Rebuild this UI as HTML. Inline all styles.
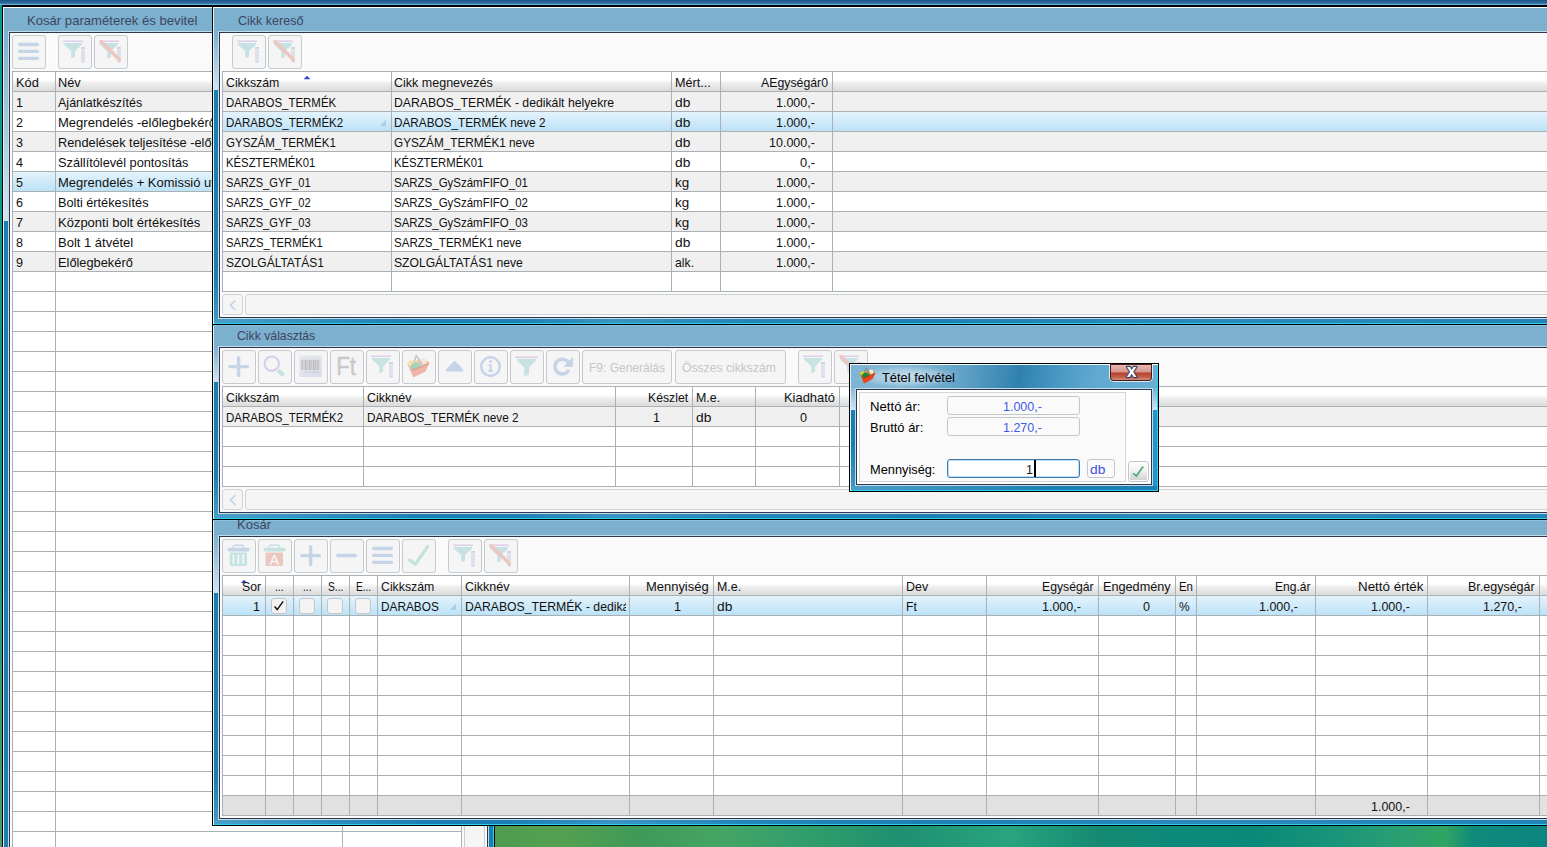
<!DOCTYPE html>
<html lang="hu"><head><meta charset="utf-8"><title>Kosár</title><style>
html,body{margin:0;padding:0;background:#fff}
#r{position:relative;width:1547px;height:847px;overflow:hidden;font-family:"Liberation Sans",sans-serif;font-size:13px;color:#111}
#r div,#r .t,#r svg.a{position:absolute}
.t{display:block;white-space:pre;transform-origin:0 50%}
.cap{letter-spacing:0}
.b{box-sizing:border-box;border:1px solid #c4cacf;border-radius:3px;background:#f5f5f5}
.i{position:absolute;left:-1px;top:-1px}
.i0{position:absolute;left:0;top:0}
.sb{box-sizing:border-box;border:1px solid #ced3d7;border-radius:3px;background:#f5f5f5}
.cb{box-sizing:border-box;width:16px;height:16px;border:1px solid #c4c6c8;border-radius:3px;background:#f3f3f3}
.f{box-sizing:border-box;border:1px solid #c4c6c8;border-radius:3px;background:#fafafa}
</style></head><body><div id="r">
<div style="left:0px;top:0px;width:1547px;height:847px;background:#fff;"></div>
<div style="left:0px;top:0px;width:1547px;height:5px;background:linear-gradient(#1d5486 0,#2a6498 45%,#3f7bb0 78%,#5fb4de 80%,#5fb4de 100%);"></div>
<div style="left:0px;top:5px;width:2px;height:842px;background:linear-gradient(#0d9a8c 0,#0a9a8a 55%,#3a9b74 80%,#4a9c6a 100%);"></div>
<div style="left:495px;top:820px;width:1060px;height:30px;background:linear-gradient(90deg,#4f9b4f 0,#55a050 65px,#3e9a58 145px,#45a565 225px,#2e9c6c 325px,#1f9070 405px,#28a47e 515px,#158a72 605px,#0e8a7a 675px,#0a8878 755px,#18947a 835px,#2a9f72 905px,#30a562 950px,#108a7a 978px,#0c8580 1052px);"></div>
<div style="left:2px;top:5px;width:493px;height:896px;background:#000;"></div>
<div style="left:3px;top:7px;width:491px;height:893px;background:#e3eff7;"></div>
<div style="left:3px;top:7px;width:491px;height:1px;background:#ffffff;"></div>
<div style="left:4px;top:8px;width:489px;height:891px;background:linear-gradient(180deg,#7bb0cf 0,#7bb0cf 24px,#d2e5f1 213px,#1a7eb0 213px,#1a7eb0 100%);"></div>
<div style="left:4px;top:895px;width:489px;height:4px;background:linear-gradient(90deg,#4a9fc9 0,#3d97c4 50px,#1c80b4 200px,#1c80b4 300px,#3a94c2 400px,#2487b9 520px,#1c80b4 700px,#2a8bbb 1000px,#2083b6 100%);"></div>
<div style="left:3px;top:899px;width:491px;height:1px;background:#2bd0ee;"></div>
<div style="left:3px;top:899px;width:1px;height:1px;background:#e8ffff;"></div>
<div style="left:493px;top:8px;width:1px;height:892px;background:#2bd0f6;"></div>
<div style="left:8px;top:31px;width:481px;height:864px;background:#c3dcea;"></div>
<div style="left:9px;top:32px;width:479px;height:862px;background:#2c374d;"></div>
<div style="left:10px;top:33px;width:477px;height:860px;background:#fafafa;"></div>
<span class="t cap" style="left:27.3px;top:9px;line-height:23px;height:23px;transform:scaleX(1.0078);color:#3f4560;">Kosár paraméterek és bevitel</span>
<div class="b" style="left:12px;top:35px;width:34px;height:34px"><svg class="i" width="34" height="34" viewBox="0 0 34 34"><path d="M7.6 9.5H25.4" stroke="#c6d4e8" stroke-width="3.3" stroke-linecap="round"/><path d="M7.6 16.45H25.4" stroke="#c6d4e8" stroke-width="3.3" stroke-linecap="round"/><path d="M7.6 23.4H25.4" stroke="#c6d4e8" stroke-width="3.3" stroke-linecap="round"/></svg></div>
<div class="b" style="left:58px;top:35px;width:34px;height:34px"><svg class="i" width="34" height="34" viewBox="0 0 34 34"><rect x="5.2" y="5.5" width="19.8" height="1.4" fill="#dccbe9"/><path d="M5.7 8.1H24.1V9.3L17.1 16.2V21.8L13.3 23.6V16.2L5.7 9.3Z" fill="#c6e2e3"/><rect x="23.2" y="12.0" width="3.6" height="15.5" fill="#dedede"/><rect x="23.7" y="12.0" width="2.6" height="15" fill="#efefef"/><rect x="23.2" y="12.0" width="3.6" height="2" fill="#d3d3d3"/><rect x="23.7" y="15.4" width="2.6" height="0.9" fill="#bfcdf3"/><rect x="23.7" y="17.5" width="2.6" height="0.9" fill="#bfcdf3"/><rect x="23.7" y="19.6" width="2.6" height="0.9" fill="#bfcdf3"/><rect x="23.7" y="21.7" width="2.6" height="0.9" fill="#bfcdf3"/><rect x="23.7" y="23.8" width="2.6" height="0.9" fill="#bfcdf3"/><rect x="23.7" y="25.9" width="2.6" height="0.9" fill="#bfcdf3"/></svg></div>
<div class="b" style="left:94px;top:35px;width:34px;height:34px"><svg class="i" width="34" height="34" viewBox="0 0 34 34"><rect x="5.2" y="5.5" width="19.8" height="1.4" fill="#dccbe9"/><path d="M5.7 8.1H24.1V9.3L17.1 16.2V21.8L13.3 23.6V16.2L5.7 9.3Z" fill="#c6e2e3"/><rect x="23.2" y="12.0" width="3.6" height="15.5" fill="#dedede"/><rect x="23.7" y="12.0" width="2.6" height="15" fill="#efefef"/><rect x="23.2" y="12.0" width="3.6" height="2" fill="#d3d3d3"/><rect x="23.7" y="15.4" width="2.6" height="0.9" fill="#bfcdf3"/><rect x="23.7" y="17.5" width="2.6" height="0.9" fill="#bfcdf3"/><rect x="23.7" y="19.6" width="2.6" height="0.9" fill="#bfcdf3"/><rect x="23.7" y="21.7" width="2.6" height="0.9" fill="#bfcdf3"/><rect x="23.7" y="23.8" width="2.6" height="0.9" fill="#bfcdf3"/><rect x="23.7" y="25.9" width="2.6" height="0.9" fill="#bfcdf3"/><path d="M7.2 6.6L25.3 24.5" stroke="#ecc7c1" stroke-width="3.6" stroke-linecap="round"/></svg></div>
<div style="left:12px;top:71px;width:450px;height:1px;background:#aab1b5;"></div>
<div style="left:13px;top:72px;width:449px;height:19px;background:linear-gradient(#fff 0,#fff 42%,#eee 58%,#dbdbdb 100%);"></div>
<div style="left:12px;top:91px;width:450px;height:1px;background:#aab1b5;"></div>
<div style="left:13px;top:92px;width:449px;height:19px;background:#f0f0f0;"></div>
<div style="left:12px;top:111px;width:450px;height:1px;background:#aab1b5;"></div>
<div style="left:13px;top:112px;width:449px;height:19px;background:#fff;"></div>
<div style="left:12px;top:131px;width:450px;height:1px;background:#aab1b5;"></div>
<div style="left:13px;top:132px;width:449px;height:19px;background:#f0f0f0;"></div>
<div style="left:12px;top:151px;width:450px;height:1px;background:#aab1b5;"></div>
<div style="left:13px;top:152px;width:449px;height:19px;background:#fff;"></div>
<div style="left:12px;top:171px;width:450px;height:1px;background:#aab1b5;"></div>
<div style="left:13px;top:172px;width:449px;height:19px;background:linear-gradient(#e4f3fc,#bce2f7);"></div>
<div style="left:12px;top:191px;width:450px;height:1px;background:#aab1b5;"></div>
<div style="left:13px;top:192px;width:449px;height:19px;background:#fff;"></div>
<div style="left:12px;top:211px;width:450px;height:1px;background:#aab1b5;"></div>
<div style="left:13px;top:212px;width:449px;height:19px;background:#f0f0f0;"></div>
<div style="left:12px;top:231px;width:450px;height:1px;background:#aab1b5;"></div>
<div style="left:13px;top:232px;width:449px;height:19px;background:#fff;"></div>
<div style="left:12px;top:251px;width:450px;height:1px;background:#aab1b5;"></div>
<div style="left:13px;top:252px;width:449px;height:19px;background:#f0f0f0;"></div>
<div style="left:12px;top:271px;width:450px;height:1px;background:#aab1b5;"></div>
<div style="left:13px;top:272px;width:449px;height:19px;background:#fff;"></div>
<div style="left:12px;top:291px;width:450px;height:1px;background:#aab1b5;"></div>
<div style="left:13px;top:292px;width:449px;height:19px;background:#fff;"></div>
<div style="left:12px;top:311px;width:450px;height:1px;background:#aab1b5;"></div>
<div style="left:13px;top:312px;width:449px;height:19px;background:#fff;"></div>
<div style="left:12px;top:331px;width:450px;height:1px;background:#aab1b5;"></div>
<div style="left:13px;top:332px;width:449px;height:19px;background:#fff;"></div>
<div style="left:12px;top:351px;width:450px;height:1px;background:#aab1b5;"></div>
<div style="left:13px;top:352px;width:449px;height:19px;background:#fff;"></div>
<div style="left:12px;top:371px;width:450px;height:1px;background:#aab1b5;"></div>
<div style="left:13px;top:372px;width:449px;height:19px;background:#fff;"></div>
<div style="left:12px;top:391px;width:450px;height:1px;background:#aab1b5;"></div>
<div style="left:13px;top:392px;width:449px;height:19px;background:#fff;"></div>
<div style="left:12px;top:411px;width:450px;height:1px;background:#aab1b5;"></div>
<div style="left:13px;top:412px;width:449px;height:19px;background:#fff;"></div>
<div style="left:12px;top:431px;width:450px;height:1px;background:#aab1b5;"></div>
<div style="left:13px;top:432px;width:449px;height:19px;background:#fff;"></div>
<div style="left:12px;top:451px;width:450px;height:1px;background:#aab1b5;"></div>
<div style="left:13px;top:452px;width:449px;height:19px;background:#fff;"></div>
<div style="left:12px;top:471px;width:450px;height:1px;background:#aab1b5;"></div>
<div style="left:13px;top:472px;width:449px;height:19px;background:#fff;"></div>
<div style="left:12px;top:491px;width:450px;height:1px;background:#aab1b5;"></div>
<div style="left:13px;top:492px;width:449px;height:19px;background:#fff;"></div>
<div style="left:12px;top:511px;width:450px;height:1px;background:#aab1b5;"></div>
<div style="left:13px;top:512px;width:449px;height:19px;background:#fff;"></div>
<div style="left:12px;top:531px;width:450px;height:1px;background:#aab1b5;"></div>
<div style="left:13px;top:532px;width:449px;height:19px;background:#fff;"></div>
<div style="left:12px;top:551px;width:450px;height:1px;background:#aab1b5;"></div>
<div style="left:13px;top:552px;width:449px;height:19px;background:#fff;"></div>
<div style="left:12px;top:571px;width:450px;height:1px;background:#aab1b5;"></div>
<div style="left:13px;top:572px;width:449px;height:19px;background:#fff;"></div>
<div style="left:12px;top:591px;width:450px;height:1px;background:#aab1b5;"></div>
<div style="left:13px;top:592px;width:449px;height:19px;background:#fff;"></div>
<div style="left:12px;top:611px;width:450px;height:1px;background:#aab1b5;"></div>
<div style="left:13px;top:612px;width:449px;height:19px;background:#fff;"></div>
<div style="left:12px;top:631px;width:450px;height:1px;background:#aab1b5;"></div>
<div style="left:13px;top:632px;width:449px;height:19px;background:#fff;"></div>
<div style="left:12px;top:651px;width:450px;height:1px;background:#aab1b5;"></div>
<div style="left:13px;top:652px;width:449px;height:19px;background:#fff;"></div>
<div style="left:12px;top:671px;width:450px;height:1px;background:#aab1b5;"></div>
<div style="left:13px;top:672px;width:449px;height:19px;background:#fff;"></div>
<div style="left:12px;top:691px;width:450px;height:1px;background:#aab1b5;"></div>
<div style="left:13px;top:692px;width:449px;height:19px;background:#fff;"></div>
<div style="left:12px;top:711px;width:450px;height:1px;background:#aab1b5;"></div>
<div style="left:13px;top:712px;width:449px;height:19px;background:#fff;"></div>
<div style="left:12px;top:731px;width:450px;height:1px;background:#aab1b5;"></div>
<div style="left:13px;top:732px;width:449px;height:19px;background:#fff;"></div>
<div style="left:12px;top:751px;width:450px;height:1px;background:#aab1b5;"></div>
<div style="left:13px;top:752px;width:449px;height:19px;background:#fff;"></div>
<div style="left:12px;top:771px;width:450px;height:1px;background:#aab1b5;"></div>
<div style="left:13px;top:772px;width:449px;height:19px;background:#fff;"></div>
<div style="left:12px;top:791px;width:450px;height:1px;background:#aab1b5;"></div>
<div style="left:13px;top:792px;width:449px;height:19px;background:#fff;"></div>
<div style="left:12px;top:811px;width:450px;height:1px;background:#aab1b5;"></div>
<div style="left:13px;top:812px;width:449px;height:19px;background:#fff;"></div>
<div style="left:12px;top:831px;width:450px;height:1px;background:#aab1b5;"></div>
<div style="left:13px;top:832px;width:449px;height:19px;background:#fff;"></div>
<div style="left:12px;top:851px;width:450px;height:1px;background:#aab1b5;"></div>
<div style="left:13px;top:852px;width:449px;height:19px;background:#fff;"></div>
<div style="left:12px;top:871px;width:450px;height:1px;background:#aab1b5;"></div>
<div style="left:12px;top:71px;width:1px;height:801px;background:#aab1b5;"></div>
<div style="left:55px;top:71px;width:1px;height:801px;background:#aab1b5;"></div>
<div style="left:342px;top:71px;width:1px;height:801px;background:#aab1b5;"></div>
<div style="left:461px;top:71px;width:1px;height:801px;background:#aab1b5;"></div>
<div class="sb" style="left:464px;top:294px;width:21px;height:600px;border-color:#c9cdd0"></div>
<span class="t " style="left:16.0px;top:73px;line-height:20px;height:20px;transform:scaleX(0.9862);">Kód</span>
<span class="t " style="left:58.0px;top:73px;line-height:20px;height:20px;transform:scaleX(0.9841);">Név</span>
<span class="t " style="left:16.0px;top:93px;line-height:20px;height:20px;transform:scaleX(0.9692);">1</span>
<span class="t " style="left:58.0px;top:93px;line-height:20px;height:20px;transform:scaleX(0.9630);">Ajánlatkészítés</span>
<span class="t " style="left:16.0px;top:113px;line-height:20px;height:20px;transform:scaleX(0.9692);">2</span>
<span class="t " style="left:58.0px;top:113px;line-height:20px;height:20px;transform:scaleX(1.0028);">Megrendelés -előlegbekérővel</span>
<span class="t " style="left:16.0px;top:133px;line-height:20px;height:20px;transform:scaleX(0.9692);">3</span>
<span class="t " style="left:58.0px;top:133px;line-height:20px;height:20px;transform:scaleX(0.9839);">Rendelések teljesítése -előlegbekérő után</span>
<span class="t " style="left:16.0px;top:153px;line-height:20px;height:20px;transform:scaleX(0.9692);">4</span>
<span class="t " style="left:58.0px;top:153px;line-height:20px;height:20px;transform:scaleX(0.9806);">Szállítólevél pontosítás</span>
<span class="t " style="left:16.0px;top:173px;line-height:20px;height:20px;transform:scaleX(0.9692);">5</span>
<span class="t " style="left:58.0px;top:173px;line-height:20px;height:20px;transform:scaleX(0.9983);">Megrendelés + Komissió után</span>
<span class="t " style="left:16.0px;top:193px;line-height:20px;height:20px;transform:scaleX(0.9692);">6</span>
<span class="t " style="left:58.0px;top:193px;line-height:20px;height:20px;transform:scaleX(0.9785);">Bolti értékesítés</span>
<span class="t " style="left:16.0px;top:213px;line-height:20px;height:20px;transform:scaleX(0.9692);">7</span>
<span class="t " style="left:58.0px;top:213px;line-height:20px;height:20px;transform:scaleX(0.9997);">Központi bolt értékesítés</span>
<span class="t " style="left:16.0px;top:233px;line-height:20px;height:20px;transform:scaleX(0.9692);">8</span>
<span class="t " style="left:58.0px;top:233px;line-height:20px;height:20px;transform:scaleX(0.9999);">Bolt 1 átvétel</span>
<span class="t " style="left:16.0px;top:253px;line-height:20px;height:20px;transform:scaleX(0.9692);">9</span>
<span class="t " style="left:58.0px;top:253px;line-height:20px;height:20px;transform:scaleX(0.9854);">Előlegbekérő</span>
<div style="left:212px;top:5px;width:1389px;height:320px;background:#000;"></div>
<div style="left:213px;top:7px;width:1387px;height:317px;background:#e3eff7;"></div>
<div style="left:213px;top:7px;width:1387px;height:1px;background:#ffffff;"></div>
<div style="left:214px;top:8px;width:1385px;height:315px;background:linear-gradient(180deg,#7bb0cf 0,#7bb0cf 24px,#d2e5f1 82px,#1a7eb0 82px,#1a7eb0 100%);"></div>
<div style="left:214px;top:279px;width:4px;height:40px;background:linear-gradient(#1a7eb0,#3f98c4);"></div>
<div style="left:214px;top:319px;width:1385px;height:4px;background:linear-gradient(90deg,#4a9fc9 0,#3d97c4 50px,#1c80b4 200px,#1c80b4 300px,#3a94c2 400px,#2487b9 520px,#1c80b4 700px,#2a8bbb 1000px,#2083b6 100%);"></div>
<div style="left:213px;top:323px;width:1387px;height:1px;background:#2bd0ee;"></div>
<div style="left:213px;top:323px;width:1px;height:1px;background:#e8ffff;"></div>
<div style="left:218px;top:31px;width:1377px;height:288px;background:#c3dcea;"></div>
<div style="left:219px;top:32px;width:1375px;height:286px;background:#2c374d;"></div>
<div style="left:220px;top:33px;width:1373px;height:284px;background:#fafafa;"></div>
<span class="t cap" style="left:237.5px;top:9px;line-height:23px;height:23px;transform:scaleX(0.9630);color:#3f4560;">Cikk kereső</span>
<div class="b" style="left:232px;top:35px;width:34px;height:34px"><svg class="i" width="34" height="34" viewBox="0 0 34 34"><rect x="5.2" y="5.5" width="19.8" height="1.4" fill="#dccbe9"/><path d="M5.7 8.1H24.1V9.3L17.1 16.2V21.8L13.3 23.6V16.2L5.7 9.3Z" fill="#c6e2e3"/><rect x="23.2" y="12.0" width="3.6" height="15.5" fill="#dedede"/><rect x="23.7" y="12.0" width="2.6" height="15" fill="#efefef"/><rect x="23.2" y="12.0" width="3.6" height="2" fill="#d3d3d3"/><rect x="23.7" y="15.4" width="2.6" height="0.9" fill="#bfcdf3"/><rect x="23.7" y="17.5" width="2.6" height="0.9" fill="#bfcdf3"/><rect x="23.7" y="19.6" width="2.6" height="0.9" fill="#bfcdf3"/><rect x="23.7" y="21.7" width="2.6" height="0.9" fill="#bfcdf3"/><rect x="23.7" y="23.8" width="2.6" height="0.9" fill="#bfcdf3"/><rect x="23.7" y="25.9" width="2.6" height="0.9" fill="#bfcdf3"/></svg></div>
<div class="b" style="left:268px;top:35px;width:34px;height:34px"><svg class="i" width="34" height="34" viewBox="0 0 34 34"><rect x="5.2" y="5.5" width="19.8" height="1.4" fill="#dccbe9"/><path d="M5.7 8.1H24.1V9.3L17.1 16.2V21.8L13.3 23.6V16.2L5.7 9.3Z" fill="#c6e2e3"/><rect x="23.2" y="12.0" width="3.6" height="15.5" fill="#dedede"/><rect x="23.7" y="12.0" width="2.6" height="15" fill="#efefef"/><rect x="23.2" y="12.0" width="3.6" height="2" fill="#d3d3d3"/><rect x="23.7" y="15.4" width="2.6" height="0.9" fill="#bfcdf3"/><rect x="23.7" y="17.5" width="2.6" height="0.9" fill="#bfcdf3"/><rect x="23.7" y="19.6" width="2.6" height="0.9" fill="#bfcdf3"/><rect x="23.7" y="21.7" width="2.6" height="0.9" fill="#bfcdf3"/><rect x="23.7" y="23.8" width="2.6" height="0.9" fill="#bfcdf3"/><rect x="23.7" y="25.9" width="2.6" height="0.9" fill="#bfcdf3"/><path d="M7.2 6.6L25.3 24.5" stroke="#ecc7c1" stroke-width="3.6" stroke-linecap="round"/></svg></div>
<div style="left:222px;top:71px;width:1378px;height:1px;background:#aab1b5;"></div>
<div style="left:223px;top:72px;width:1377px;height:19px;background:linear-gradient(#fff 0,#fff 42%,#eee 58%,#dbdbdb 100%);"></div>
<div style="left:222px;top:91px;width:1378px;height:1px;background:#aab1b5;"></div>
<div style="left:223px;top:92px;width:1377px;height:19px;background:#f0f0f0;"></div>
<div style="left:222px;top:111px;width:1378px;height:1px;background:#aab1b5;"></div>
<div style="left:223px;top:112px;width:1377px;height:19px;background:linear-gradient(#e4f3fc,#bce2f7);"></div>
<div style="left:222px;top:131px;width:1378px;height:1px;background:#aab1b5;"></div>
<div style="left:223px;top:132px;width:1377px;height:19px;background:#f0f0f0;"></div>
<div style="left:222px;top:151px;width:1378px;height:1px;background:#aab1b5;"></div>
<div style="left:223px;top:152px;width:1377px;height:19px;background:#fff;"></div>
<div style="left:222px;top:171px;width:1378px;height:1px;background:#aab1b5;"></div>
<div style="left:223px;top:172px;width:1377px;height:19px;background:#f0f0f0;"></div>
<div style="left:222px;top:191px;width:1378px;height:1px;background:#aab1b5;"></div>
<div style="left:223px;top:192px;width:1377px;height:19px;background:#fff;"></div>
<div style="left:222px;top:211px;width:1378px;height:1px;background:#aab1b5;"></div>
<div style="left:223px;top:212px;width:1377px;height:19px;background:#f0f0f0;"></div>
<div style="left:222px;top:231px;width:1378px;height:1px;background:#aab1b5;"></div>
<div style="left:223px;top:232px;width:1377px;height:19px;background:#fff;"></div>
<div style="left:222px;top:251px;width:1378px;height:1px;background:#aab1b5;"></div>
<div style="left:223px;top:252px;width:1377px;height:19px;background:#f0f0f0;"></div>
<div style="left:222px;top:271px;width:1378px;height:1px;background:#aab1b5;"></div>
<div style="left:223px;top:272px;width:1377px;height:19px;background:#fff;"></div>
<div style="left:222px;top:291px;width:1378px;height:1px;background:#aab1b5;"></div>
<div style="left:222px;top:71px;width:1px;height:221px;background:#aab1b5;"></div>
<div style="left:391px;top:71px;width:1px;height:221px;background:#aab1b5;"></div>
<div style="left:671px;top:71px;width:1px;height:221px;background:#aab1b5;"></div>
<div style="left:720px;top:71px;width:1px;height:221px;background:#aab1b5;"></div>
<div style="left:832px;top:71px;width:1px;height:221px;background:#aab1b5;"></div>
<svg class="a" style="left:303px;top:75px" width="8" height="5" viewBox="0 0 8 5"><path d="M0.6 4.3L4 0.7L7.4 4.3Z" fill="#3d3fd8"/></svg>
<svg class="a" style="left:379px;top:119px" width="8" height="8" viewBox="0 0 8 8"><path d="M0.8 7H7V0.8Z" fill="#a9cdea"/></svg>
<span class="t " style="left:226.0px;top:73px;line-height:20px;height:20px;transform:scaleX(0.9468);">Cikkszám</span>
<span class="t " style="left:394.0px;top:73px;line-height:20px;height:20px;transform:scaleX(0.9622);">Cikk megnevezés</span>
<span class="t " style="left:674.5px;top:73px;line-height:20px;height:20px;transform:scaleX(0.9733);">Mért...</span>
<span class="t " style="left:761.0px;top:73px;line-height:20px;height:20px;transform:scaleX(0.9463);">AEgységár0</span>
<span class="t " style="left:226.0px;top:93px;line-height:20px;height:20px;transform:scaleX(0.8816);">DARABOS_TERMÉK</span>
<span class="t " style="left:394.0px;top:93px;line-height:20px;height:20px;transform:scaleX(0.9403);">DARABOS_TERMÉK - dedikált helyekre</span>
<span class="t " style="left:674.5px;top:93px;line-height:20px;height:20px;transform:scaleX(1.0579);">db</span>
<span class="t " style="left:775.6px;top:93px;line-height:20px;height:20px;transform:scaleX(0.9603);">1.000,-</span>
<span class="t " style="left:226.0px;top:113px;line-height:20px;height:20px;transform:scaleX(0.8864);">DARABOS_TERMÉK2</span>
<span class="t " style="left:394.0px;top:113px;line-height:20px;height:20px;transform:scaleX(0.9037);">DARABOS_TERMÉK neve 2</span>
<span class="t " style="left:674.5px;top:113px;line-height:20px;height:20px;transform:scaleX(1.0579);">db</span>
<span class="t " style="left:775.6px;top:113px;line-height:20px;height:20px;transform:scaleX(0.9603);">1.000,-</span>
<span class="t " style="left:226.0px;top:133px;line-height:20px;height:20px;transform:scaleX(0.8892);">GYSZÁM_TERMÉK1</span>
<span class="t " style="left:394.0px;top:133px;line-height:20px;height:20px;transform:scaleX(0.9051);">GYSZÁM_TERMÉK1 neve</span>
<span class="t " style="left:674.5px;top:133px;line-height:20px;height:20px;transform:scaleX(1.0579);">db</span>
<span class="t " style="left:768.6px;top:133px;line-height:20px;height:20px;transform:scaleX(0.9617);">10.000,-</span>
<span class="t " style="left:226.0px;top:153px;line-height:20px;height:20px;transform:scaleX(0.8716);">KÉSZTERMÉK01</span>
<span class="t " style="left:394.0px;top:153px;line-height:20px;height:20px;transform:scaleX(0.8716);">KÉSZTERMÉK01</span>
<span class="t " style="left:674.5px;top:153px;line-height:20px;height:20px;transform:scaleX(1.0579);">db</span>
<span class="t " style="left:799.5px;top:153px;line-height:20px;height:20px;transform:scaleX(0.9903);">0,-</span>
<span class="t " style="left:226.0px;top:173px;line-height:20px;height:20px;transform:scaleX(0.8550);">SARZS_GYF_01</span>
<span class="t " style="left:394.0px;top:173px;line-height:20px;height:20px;transform:scaleX(0.8829);">SARZS_GySzámFIFO_01</span>
<span class="t " style="left:674.5px;top:173px;line-height:20px;height:20px;transform:scaleX(1.0282);">kg</span>
<span class="t " style="left:775.6px;top:173px;line-height:20px;height:20px;transform:scaleX(0.9603);">1.000,-</span>
<span class="t " style="left:226.0px;top:193px;line-height:20px;height:20px;transform:scaleX(0.8550);">SARZS_GYF_02</span>
<span class="t " style="left:394.0px;top:193px;line-height:20px;height:20px;transform:scaleX(0.8829);">SARZS_GySzámFIFO_02</span>
<span class="t " style="left:674.5px;top:193px;line-height:20px;height:20px;transform:scaleX(1.0282);">kg</span>
<span class="t " style="left:775.6px;top:193px;line-height:20px;height:20px;transform:scaleX(0.9603);">1.000,-</span>
<span class="t " style="left:226.0px;top:213px;line-height:20px;height:20px;transform:scaleX(0.8550);">SARZS_GYF_03</span>
<span class="t " style="left:394.0px;top:213px;line-height:20px;height:20px;transform:scaleX(0.8829);">SARZS_GySzámFIFO_03</span>
<span class="t " style="left:674.5px;top:213px;line-height:20px;height:20px;transform:scaleX(1.0282);">kg</span>
<span class="t " style="left:775.6px;top:213px;line-height:20px;height:20px;transform:scaleX(0.9603);">1.000,-</span>
<span class="t " style="left:226.0px;top:233px;line-height:20px;height:20px;transform:scaleX(0.8640);">SARZS_TERMÉK1</span>
<span class="t " style="left:394.0px;top:233px;line-height:20px;height:20px;transform:scaleX(0.8867);">SARZS_TERMÉK1 neve</span>
<span class="t " style="left:674.5px;top:233px;line-height:20px;height:20px;transform:scaleX(1.0579);">db</span>
<span class="t " style="left:775.6px;top:233px;line-height:20px;height:20px;transform:scaleX(0.9603);">1.000,-</span>
<span class="t " style="left:226.0px;top:253px;line-height:20px;height:20px;transform:scaleX(0.9224);">SZOLGÁLTATÁS1</span>
<span class="t " style="left:394.0px;top:253px;line-height:20px;height:20px;transform:scaleX(0.9326);">SZOLGÁLTATÁS1 neve</span>
<span class="t " style="left:674.5px;top:253px;line-height:20px;height:20px;transform:scaleX(0.9413);">alk.</span>
<span class="t " style="left:775.6px;top:253px;line-height:20px;height:20px;transform:scaleX(0.9603);">1.000,-</span>
<div class="sb" style="left:222px;top:294px;width:21px;height:21px"><svg width="21" height="21" viewBox="0 0 21 21" class="i0"><path d="M12.4 5.4L7.4 10.2L12.4 15" fill="none" stroke="#c5d4e8" stroke-width="1.7"/></svg></div>
<div class="sb" style="left:245px;top:294px;width:1400px;height:21px"></div>
<div style="left:212px;top:324px;width:1389px;height:196px;background:#000;"></div>
<div style="left:213px;top:325px;width:1387px;height:194px;background:#e3eff7;"></div>
<div style="left:213px;top:325px;width:1387px;height:1px;background:#8fc0dc;"></div>
<div style="left:214px;top:326px;width:1385px;height:192px;background:linear-gradient(180deg,#7bb0cf 0,#7bb0cf 21px,#d2e5f1 56px,#1a7eb0 56px,#1a7eb0 100%);"></div>
<div style="left:214px;top:474px;width:4px;height:40px;background:linear-gradient(#1a7eb0,#3f98c4);"></div>
<div style="left:214px;top:514px;width:1385px;height:4px;background:linear-gradient(90deg,#4a9fc9 0,#3d97c4 50px,#1c80b4 200px,#1c80b4 300px,#3a94c2 400px,#2487b9 520px,#1c80b4 700px,#2a8bbb 1000px,#2083b6 100%);"></div>
<div style="left:213px;top:518px;width:1387px;height:1px;background:#2bd0ee;"></div>
<div style="left:213px;top:518px;width:1px;height:1px;background:#e8ffff;"></div>
<div style="left:218px;top:346px;width:1377px;height:168px;background:#c3dcea;"></div>
<div style="left:219px;top:347px;width:1375px;height:166px;background:#2c374d;"></div>
<div style="left:220px;top:348px;width:1373px;height:164px;background:#fafafa;"></div>
<span class="t cap" style="left:237.3px;top:324px;line-height:23px;height:23px;transform:scaleX(0.9415);color:#3f4560;">Cikk választás</span>
<div class="b" style="left:222px;top:350px;width:34px;height:34px"><svg class="i" width="34" height="34" viewBox="0 0 34 34"><path d="M7.8 16.6H25.4M16.6 7.8V25.4" stroke="#c6d4e8" stroke-width="3.4" stroke-linecap="round"/></svg></div>
<div class="b" style="left:258px;top:350px;width:34px;height:34px"><svg class="i" width="34" height="34" viewBox="0 0 34 34"><circle cx="13.8" cy="13.7" r="7.2" fill="none" stroke="#dccbe9" stroke-width="2.1"/><path d="M20.2 20.4L25.6 25.4" stroke="#c6e2e3" stroke-width="4.2"/></svg></div>
<div class="b" style="left:294px;top:350px;width:34px;height:34px"><svg class="i" width="34" height="34" viewBox="0 0 34 34"><defs><linearGradient id="bcg" x1="0" y1="0" x2="1" y2="1"><stop offset="0" stop-color="#e6e7ee"/><stop offset="1" stop-color="#d9dcea"/></linearGradient></defs><rect x="5.3" y="5.6" width="22.4" height="21.4" rx="1" fill="url(#bcg)"/><rect x="7.3" y="9.8" width="1.4" height="10.2" fill="#bcbcbe"/><rect x="9.6" y="9.8" width="0.8" height="10.2" fill="#bcbcbe"/><rect x="11.0" y="9.8" width="1.6" height="10.2" fill="#bcbcbe"/><rect x="13.4" y="9.8" width="0.8" height="10.2" fill="#bcbcbe"/><rect x="14.8" y="9.8" width="1.8" height="10.2" fill="#bcbcbe"/><rect x="17.3" y="9.8" width="0.9" height="10.2" fill="#bcbcbe"/><rect x="18.8" y="9.8" width="1.7" height="10.2" fill="#bcbcbe"/><rect x="21.2" y="9.8" width="0.8" height="10.2" fill="#bcbcbe"/><rect x="22.6" y="9.8" width="1.2" height="10.2" fill="#bcbcbe"/><rect x="24.4" y="9.8" width="0.8" height="10.2" fill="#bcbcbe"/><rect x="10.3" y="21.4" width="1.5" height="1.6" fill="#c9cad3"/><rect x="12.8" y="21.4" width="1.5" height="1.6" fill="#c9cad3"/><rect x="15.3" y="21.4" width="1.5" height="1.6" fill="#c9cad3"/><rect x="17.8" y="21.4" width="1.5" height="1.6" fill="#c9cad3"/><rect x="20.3" y="21.4" width="1.5" height="1.6" fill="#c9cad3"/><rect x="22.8" y="21.4" width="1.5" height="1.6" fill="#c9cad3"/></svg></div>
<div class="b" style="left:330px;top:350px;width:34px;height:34px"><svg class="i" width="34" height="34" viewBox="0 0 34 34"><text x="6.2" y="24.9" font-family="Liberation Sans, sans-serif" font-size="25" textLength="19.8" lengthAdjust="spacingAndGlyphs" fill="#c9c9c9" stroke="#c9c9c9" stroke-width="0.45">Ft</text></svg></div>
<div class="b" style="left:366px;top:350px;width:34px;height:34px"><svg class="i" width="34" height="34" viewBox="0 0 34 34"><rect x="5.2" y="5.5" width="19.8" height="1.4" fill="#dccbe9"/><path d="M5.7 8.1H24.1V9.3L17.1 16.2V21.8L13.3 23.6V16.2L5.7 9.3Z" fill="#c6e2e3"/><rect x="23.2" y="12.0" width="3.6" height="15.5" fill="#dedede"/><rect x="23.7" y="12.0" width="2.6" height="15" fill="#efefef"/><rect x="23.2" y="12.0" width="3.6" height="2" fill="#d3d3d3"/><rect x="23.7" y="15.4" width="2.6" height="0.9" fill="#bfcdf3"/><rect x="23.7" y="17.5" width="2.6" height="0.9" fill="#bfcdf3"/><rect x="23.7" y="19.6" width="2.6" height="0.9" fill="#bfcdf3"/><rect x="23.7" y="21.7" width="2.6" height="0.9" fill="#bfcdf3"/><rect x="23.7" y="23.8" width="2.6" height="0.9" fill="#bfcdf3"/><rect x="23.7" y="25.9" width="2.6" height="0.9" fill="#bfcdf3"/></svg></div>
<div class="b" style="left:402px;top:350px;width:34px;height:34px"><svg class="i" width="34" height="34" viewBox="0 0 34 34"><path d="M5.2 13.6L22.6 8.2L27.4 12.6L10.6 19.4Z" fill="#f2c9a4"/><ellipse cx="9.3" cy="13.5" rx="3.4" ry="3" fill="#f3e3a8"/><ellipse cx="21.5" cy="11.3" rx="3.2" ry="3.4" fill="#f6e8dc"/><ellipse cx="13.8" cy="17" rx="5.2" ry="4.6" fill="#a3d3bd"/><path d="M5.2 13.6L10.6 19.4L27.4 12.6L23.6 21.4L11.4 27.6Z" fill="#efb5a8"/><path d="M9.6 18.6Q12 13 17.6 14.8L19 17.4L10.9 20.6Z" fill="#a3d3bd"/><path d="M10.6 19.4L27.4 12.6L26.6 14.4L10.9 21Z" fill="#e99b8b"/><path d="M11.8 12L14.4 5.6L21.4 16.4" stroke="#c3c3c8" stroke-width="1.5" fill="none" stroke-linejoin="round"/></svg></div>
<div class="b" style="left:438px;top:350px;width:34px;height:34px"><svg class="i" width="34" height="34" viewBox="0 0 34 34"><path d="M16.6 12.4L23.9 20.2H9.3Z" fill="#c6d4e8" stroke="#c6d4e8" stroke-width="2.8" stroke-linejoin="round"/></svg></div>
<div class="b" style="left:474px;top:350px;width:34px;height:34px"><svg class="i" width="34" height="34" viewBox="0 0 34 34"><circle cx="16.5" cy="16.6" r="9.3" fill="none" stroke="#c6d4e8" stroke-width="2.5"/><circle cx="16.5" cy="11.6" r="1.5" fill="#c6d4e8"/><path d="M14.4 14.4H17.8V20.3H19V21.9H14.2V20.3H15.5V15.9H14.4Z" fill="#c6d4e8"/></svg></div>
<div class="b" style="left:510px;top:350px;width:34px;height:34px"><svg class="i" width="34" height="34" viewBox="0 0 34 34"><rect x="5.5" y="6.5" width="22" height="1.5" fill="#dccbe9"/><path d="M7 9H26V10.6L19 17.6V24.6L14.2 26.4V17.6L7 10.6Z" fill="#c6e2e3"/></svg></div>
<div class="b" style="left:546px;top:350px;width:34px;height:34px"><svg class="i" width="34" height="34" viewBox="0 0 34 34"><path d="M21.5 11.3A7.4 7.4 0 1 0 22.1 21.1" fill="none" stroke="#c6d4e8" stroke-width="3.5" stroke-linecap="round"/><path d="M26.7 7.6V16.5H18Z" fill="#c6d4e8" stroke="#c6d4e8" stroke-width="0.8" stroke-linejoin="round"/></svg></div>
<div class="b" style="left:582px;top:350px;width:90px;height:34px"></div>
<div class="b" style="left:675px;top:350px;width:111px;height:34px"></div>
<span class="t " style="left:589.3px;top:358px;line-height:20px;height:20px;transform:scaleX(0.9228);color:#c6c6c6;">F9: Generálás</span>
<span class="t " style="left:682.3px;top:358px;line-height:20px;height:20px;transform:scaleX(0.9351);color:#c6c6c6;">Összes cikkszám</span>
<div class="b" style="left:798px;top:350px;width:34px;height:34px"><svg class="i" width="34" height="34" viewBox="0 0 34 34"><rect x="5.2" y="5.5" width="19.8" height="1.4" fill="#dccbe9"/><path d="M5.7 8.1H24.1V9.3L17.1 16.2V21.8L13.3 23.6V16.2L5.7 9.3Z" fill="#c6e2e3"/><rect x="23.2" y="12.0" width="3.6" height="15.5" fill="#dedede"/><rect x="23.7" y="12.0" width="2.6" height="15" fill="#efefef"/><rect x="23.2" y="12.0" width="3.6" height="2" fill="#d3d3d3"/><rect x="23.7" y="15.4" width="2.6" height="0.9" fill="#bfcdf3"/><rect x="23.7" y="17.5" width="2.6" height="0.9" fill="#bfcdf3"/><rect x="23.7" y="19.6" width="2.6" height="0.9" fill="#bfcdf3"/><rect x="23.7" y="21.7" width="2.6" height="0.9" fill="#bfcdf3"/><rect x="23.7" y="23.8" width="2.6" height="0.9" fill="#bfcdf3"/><rect x="23.7" y="25.9" width="2.6" height="0.9" fill="#bfcdf3"/></svg></div>
<div class="b" style="left:834px;top:350px;width:34px;height:34px"><svg class="i" width="34" height="34" viewBox="0 0 34 34"><rect x="5.2" y="5.5" width="19.8" height="1.4" fill="#dccbe9"/><path d="M5.7 8.1H24.1V9.3L17.1 16.2V21.8L13.3 23.6V16.2L5.7 9.3Z" fill="#c6e2e3"/><rect x="23.2" y="12.0" width="3.6" height="15.5" fill="#dedede"/><rect x="23.7" y="12.0" width="2.6" height="15" fill="#efefef"/><rect x="23.2" y="12.0" width="3.6" height="2" fill="#d3d3d3"/><rect x="23.7" y="15.4" width="2.6" height="0.9" fill="#bfcdf3"/><rect x="23.7" y="17.5" width="2.6" height="0.9" fill="#bfcdf3"/><rect x="23.7" y="19.6" width="2.6" height="0.9" fill="#bfcdf3"/><rect x="23.7" y="21.7" width="2.6" height="0.9" fill="#bfcdf3"/><rect x="23.7" y="23.8" width="2.6" height="0.9" fill="#bfcdf3"/><rect x="23.7" y="25.9" width="2.6" height="0.9" fill="#bfcdf3"/><path d="M7.2 6.6L25.3 24.5" stroke="#ecc7c1" stroke-width="3.6" stroke-linecap="round"/></svg></div>
<div style="left:222px;top:386px;width:1378px;height:1px;background:#aab1b5;"></div>
<div style="left:223px;top:387px;width:1377px;height:19px;background:linear-gradient(#fff 0,#fff 42%,#eee 58%,#dbdbdb 100%);"></div>
<div style="left:222px;top:406px;width:1378px;height:1px;background:#aab1b5;"></div>
<div style="left:223px;top:407px;width:1377px;height:19px;background:#f0f0f0;"></div>
<div style="left:222px;top:426px;width:1378px;height:1px;background:#aab1b5;"></div>
<div style="left:223px;top:427px;width:1377px;height:19px;background:#fff;"></div>
<div style="left:222px;top:446px;width:1378px;height:1px;background:#aab1b5;"></div>
<div style="left:223px;top:447px;width:1377px;height:19px;background:#fff;"></div>
<div style="left:222px;top:466px;width:1378px;height:1px;background:#aab1b5;"></div>
<div style="left:223px;top:467px;width:1377px;height:19px;background:#fff;"></div>
<div style="left:222px;top:486px;width:1378px;height:1px;background:#aab1b5;"></div>
<div style="left:222px;top:386px;width:1px;height:101px;background:#aab1b5;"></div>
<div style="left:363px;top:386px;width:1px;height:101px;background:#aab1b5;"></div>
<div style="left:615px;top:386px;width:1px;height:101px;background:#aab1b5;"></div>
<div style="left:692px;top:386px;width:1px;height:101px;background:#aab1b5;"></div>
<div style="left:755px;top:386px;width:1px;height:101px;background:#aab1b5;"></div>
<div style="left:839px;top:386px;width:1px;height:101px;background:#aab1b5;"></div>
<span class="t " style="left:226.0px;top:388px;line-height:20px;height:20px;transform:scaleX(0.9468);">Cikkszám</span>
<span class="t " style="left:366.5px;top:388px;line-height:20px;height:20px;transform:scaleX(0.9625);">Cikknév</span>
<span class="t " style="left:647.9px;top:388px;line-height:20px;height:20px;transform:scaleX(0.9404);">Készlet</span>
<span class="t " style="left:695.5px;top:388px;line-height:20px;height:20px;transform:scaleX(0.9535);">M.e.</span>
<span class="t " style="left:784.0px;top:388px;line-height:20px;height:20px;transform:scaleX(0.9928);">Kiadható</span>
<span class="t " style="left:226.0px;top:408px;line-height:20px;height:20px;transform:scaleX(0.8864);">DARABOS_TERMÉK2</span>
<span class="t " style="left:366.5px;top:408px;line-height:20px;height:20px;transform:scaleX(0.9037);">DARABOS_TERMÉK neve 2</span>
<span class="t " style="left:653.0px;top:408px;line-height:20px;height:20px;transform:scaleX(0.9692);">1</span>
<span class="t " style="left:695.5px;top:408px;line-height:20px;height:20px;transform:scaleX(1.0579);">db</span>
<span class="t " style="left:800.0px;top:408px;line-height:20px;height:20px;transform:scaleX(0.9692);">0</span>
<div class="sb" style="left:222px;top:489px;width:21px;height:21px"><svg width="21" height="21" viewBox="0 0 21 21" class="i0"><path d="M12.4 5.4L7.4 10.2L12.4 15" fill="none" stroke="#c5d4e8" stroke-width="1.7"/></svg></div>
<div class="sb" style="left:245px;top:489px;width:1400px;height:21px"></div>
<div style="left:212px;top:519px;width:1389px;height:307px;background:#000;"></div>
<div style="left:213px;top:520px;width:1387px;height:305px;background:#e3eff7;"></div>
<div style="left:213px;top:520px;width:1387px;height:1px;background:#8fc0dc;"></div>
<div style="left:214px;top:521px;width:1385px;height:303px;background:linear-gradient(180deg,#7bb0cf 0,#7bb0cf 15px,#d2e5f1 72px,#1a7eb0 72px,#1a7eb0 100%);"></div>
<div style="left:214px;top:780px;width:4px;height:40px;background:linear-gradient(#1a7eb0,#3f98c4);"></div>
<div style="left:214px;top:820px;width:1385px;height:4px;background:linear-gradient(90deg,#4a9fc9 0,#3d97c4 50px,#1c80b4 200px,#1c80b4 300px,#3a94c2 400px,#2487b9 520px,#1c80b4 700px,#2a8bbb 1000px,#2083b6 100%);"></div>
<div style="left:213px;top:824px;width:1387px;height:1px;background:#2bd0ee;"></div>
<div style="left:213px;top:824px;width:1px;height:1px;background:#e8ffff;"></div>
<div style="left:218px;top:535px;width:1377px;height:285px;background:#c3dcea;"></div>
<div style="left:219px;top:536px;width:1375px;height:283px;background:#2c374d;"></div>
<div style="left:220px;top:537px;width:1373px;height:281px;background:#fafafa;"></div>
<div style="left:214px;top:520px;width:200px;height:15px;overflow:hidden">
<span class="t cap" style="left:23.0px;top:-5px;line-height:20px;height:20px;transform:scaleX(1.0011);color:#3f4560;">Kosár</span>
</div>
<div class="b" style="left:222px;top:539px;width:34px;height:34px"><svg class="i" width="34" height="34" viewBox="0 0 34 34"><rect x="11.2" y="6.3" width="10.4" height="4" rx="1.6" fill="none" stroke="#c6d4e8" stroke-width="1.4"/><rect x="5.4" y="8.7" width="22.2" height="3.8" rx="1.7" fill="#c6d4e8"/><path d="M7.6 13.4H25V25.4Q25 27 23.4 27H9.2Q7.6 27 7.6 25.4Z" fill="#c6e2e3"/><rect x="10.6" y="15.4" width="1.7" height="9.6" rx="0.8" fill="#f7f9f9"/><rect x="15.5" y="15.4" width="1.7" height="9.6" rx="0.8" fill="#f7f9f9"/><rect x="20.4" y="15.4" width="1.7" height="9.6" rx="0.8" fill="#f7f9f9"/></svg></div>
<div class="b" style="left:258px;top:539px;width:34px;height:34px"><svg class="i" width="34" height="34" viewBox="0 0 34 34"><rect x="11.2" y="6.3" width="10.4" height="4" rx="1.6" fill="none" stroke="#c6e2e3" stroke-width="1.4"/><rect x="5.4" y="8.7" width="22.2" height="3.8" rx="1.7" fill="#c6e2e3"/><path d="M7.6 13.4H25V25.4Q25 27 23.4 27H9.2Q7.6 27 7.6 25.4Z" fill="#ecc7c1"/><text x="16.3" y="25.6" text-anchor="middle" font-family="Liberation Sans, sans-serif" font-size="14.5" fill="#fafafa">A</text></svg></div>
<div class="b" style="left:294px;top:539px;width:34px;height:34px"><svg class="i" width="34" height="34" viewBox="0 0 34 34"><path d="M7.8 16.6H25.4M16.6 7.8V25.4" stroke="#c6d4e8" stroke-width="3.4" stroke-linecap="round"/></svg></div>
<div class="b" style="left:330px;top:539px;width:34px;height:34px"><svg class="i" width="34" height="34" viewBox="0 0 34 34"><path d="M7.8 16.5H25.4" stroke="#c6d4e8" stroke-width="3.4" stroke-linecap="round"/></svg></div>
<div class="b" style="left:366px;top:539px;width:34px;height:34px"><svg class="i" width="34" height="34" viewBox="0 0 34 34"><path d="M7.6 9.5H25.4" stroke="#c6d4e8" stroke-width="3.3" stroke-linecap="round"/><path d="M7.6 16.45H25.4" stroke="#c6d4e8" stroke-width="3.3" stroke-linecap="round"/><path d="M7.6 23.4H25.4" stroke="#c6d4e8" stroke-width="3.3" stroke-linecap="round"/></svg></div>
<div class="b" style="left:402px;top:539px;width:34px;height:34px"><svg class="i" width="34" height="34" viewBox="0 0 34 34"><path d="M7.4 20.9L13.3 25.3L25.6 7.6" fill="none" stroke="#c6e4d6" stroke-width="3.3" stroke-linecap="round" stroke-linejoin="round"/></svg></div>
<div class="b" style="left:448px;top:539px;width:34px;height:34px"><svg class="i" width="34" height="34" viewBox="0 0 34 34"><rect x="5.2" y="5.5" width="19.8" height="1.4" fill="#dccbe9"/><path d="M5.7 8.1H24.1V9.3L17.1 16.2V21.8L13.3 23.6V16.2L5.7 9.3Z" fill="#c6e2e3"/><rect x="23.2" y="12.0" width="3.6" height="15.5" fill="#dedede"/><rect x="23.7" y="12.0" width="2.6" height="15" fill="#efefef"/><rect x="23.2" y="12.0" width="3.6" height="2" fill="#d3d3d3"/><rect x="23.7" y="15.4" width="2.6" height="0.9" fill="#bfcdf3"/><rect x="23.7" y="17.5" width="2.6" height="0.9" fill="#bfcdf3"/><rect x="23.7" y="19.6" width="2.6" height="0.9" fill="#bfcdf3"/><rect x="23.7" y="21.7" width="2.6" height="0.9" fill="#bfcdf3"/><rect x="23.7" y="23.8" width="2.6" height="0.9" fill="#bfcdf3"/><rect x="23.7" y="25.9" width="2.6" height="0.9" fill="#bfcdf3"/></svg></div>
<div class="b" style="left:484px;top:539px;width:34px;height:34px"><svg class="i" width="34" height="34" viewBox="0 0 34 34"><rect x="5.2" y="5.5" width="19.8" height="1.4" fill="#dccbe9"/><path d="M5.7 8.1H24.1V9.3L17.1 16.2V21.8L13.3 23.6V16.2L5.7 9.3Z" fill="#c6e2e3"/><rect x="23.2" y="12.0" width="3.6" height="15.5" fill="#dedede"/><rect x="23.7" y="12.0" width="2.6" height="15" fill="#efefef"/><rect x="23.2" y="12.0" width="3.6" height="2" fill="#d3d3d3"/><rect x="23.7" y="15.4" width="2.6" height="0.9" fill="#bfcdf3"/><rect x="23.7" y="17.5" width="2.6" height="0.9" fill="#bfcdf3"/><rect x="23.7" y="19.6" width="2.6" height="0.9" fill="#bfcdf3"/><rect x="23.7" y="21.7" width="2.6" height="0.9" fill="#bfcdf3"/><rect x="23.7" y="23.8" width="2.6" height="0.9" fill="#bfcdf3"/><rect x="23.7" y="25.9" width="2.6" height="0.9" fill="#bfcdf3"/><path d="M7.2 6.6L25.3 24.5" stroke="#ecc7c1" stroke-width="3.6" stroke-linecap="round"/></svg></div>
<div style="left:222px;top:575px;width:1378px;height:1px;background:#aab1b5;"></div>
<div style="left:223px;top:576px;width:1377px;height:19px;background:linear-gradient(#fff 0,#fff 42%,#eee 58%,#dbdbdb 100%);"></div>
<div style="left:222px;top:595px;width:1378px;height:1px;background:#aab1b5;"></div>
<div style="left:223px;top:596px;width:1377px;height:19px;background:linear-gradient(#e4f3fc,#bce2f7);"></div>
<div style="left:222px;top:615px;width:1378px;height:1px;background:#aab1b5;"></div>
<div style="left:223px;top:616px;width:1377px;height:19px;background:#fff;"></div>
<div style="left:222px;top:635px;width:1378px;height:1px;background:#aab1b5;"></div>
<div style="left:223px;top:636px;width:1377px;height:19px;background:#fff;"></div>
<div style="left:222px;top:655px;width:1378px;height:1px;background:#aab1b5;"></div>
<div style="left:223px;top:656px;width:1377px;height:19px;background:#fff;"></div>
<div style="left:222px;top:675px;width:1378px;height:1px;background:#aab1b5;"></div>
<div style="left:223px;top:676px;width:1377px;height:19px;background:#fff;"></div>
<div style="left:222px;top:695px;width:1378px;height:1px;background:#aab1b5;"></div>
<div style="left:223px;top:696px;width:1377px;height:19px;background:#fff;"></div>
<div style="left:222px;top:715px;width:1378px;height:1px;background:#aab1b5;"></div>
<div style="left:223px;top:716px;width:1377px;height:19px;background:#fff;"></div>
<div style="left:222px;top:735px;width:1378px;height:1px;background:#aab1b5;"></div>
<div style="left:223px;top:736px;width:1377px;height:19px;background:#fff;"></div>
<div style="left:222px;top:755px;width:1378px;height:1px;background:#aab1b5;"></div>
<div style="left:223px;top:756px;width:1377px;height:19px;background:#fff;"></div>
<div style="left:222px;top:775px;width:1378px;height:1px;background:#aab1b5;"></div>
<div style="left:223px;top:776px;width:1377px;height:19px;background:#fff;"></div>
<div style="left:222px;top:795px;width:1378px;height:1px;background:#aab1b5;"></div>
<div style="left:223px;top:796px;width:1377px;height:19px;background:#e1e1e1;"></div>
<div style="left:222px;top:815px;width:1378px;height:1px;background:#aab1b5;"></div>
<div style="left:222px;top:575px;width:1px;height:241px;background:#aab1b5;"></div>
<div style="left:265px;top:575px;width:1px;height:241px;background:#aab1b5;"></div>
<div style="left:293px;top:575px;width:1px;height:241px;background:#aab1b5;"></div>
<div style="left:321px;top:575px;width:1px;height:241px;background:#aab1b5;"></div>
<div style="left:349px;top:575px;width:1px;height:241px;background:#aab1b5;"></div>
<div style="left:377px;top:575px;width:1px;height:241px;background:#aab1b5;"></div>
<div style="left:461px;top:575px;width:1px;height:241px;background:#aab1b5;"></div>
<div style="left:629px;top:575px;width:1px;height:241px;background:#aab1b5;"></div>
<div style="left:713px;top:575px;width:1px;height:241px;background:#aab1b5;"></div>
<div style="left:902px;top:575px;width:1px;height:241px;background:#aab1b5;"></div>
<div style="left:986px;top:575px;width:1px;height:241px;background:#aab1b5;"></div>
<div style="left:1098px;top:575px;width:1px;height:241px;background:#aab1b5;"></div>
<div style="left:1175px;top:575px;width:1px;height:241px;background:#aab1b5;"></div>
<div style="left:1196px;top:575px;width:1px;height:241px;background:#aab1b5;"></div>
<div style="left:1315px;top:575px;width:1px;height:241px;background:#aab1b5;"></div>
<div style="left:1427px;top:575px;width:1px;height:241px;background:#aab1b5;"></div>
<div style="left:1539px;top:575px;width:1px;height:241px;background:#aab1b5;"></div>
<svg class="a" style="left:240px;top:579px" width="8" height="5" viewBox="0 0 8 5"><path d="M0.8 4L4 0.8L7.2 4Z" fill="#3d3fd8"/></svg>
<svg class="a" style="left:449px;top:603px" width="8" height="8" viewBox="0 0 8 8"><path d="M0.8 7H7V0.8Z" fill="#a9cdea"/></svg>
<span class="t " style="left:242.0px;top:577px;line-height:20px;height:20px;transform:scaleX(0.9410);">Sor</span>
<span class="t " style="left:275.3px;top:577px;line-height:20px;height:20px;transform:scaleX(0.7804);">...</span>
<span class="t " style="left:303.3px;top:577px;line-height:20px;height:20px;transform:scaleX(0.7804);">...</span>
<span class="t " style="left:327.8px;top:577px;line-height:20px;height:20px;transform:scaleX(0.7872);">S...</span>
<span class="t " style="left:356.0px;top:577px;line-height:20px;height:20px;transform:scaleX(0.7706);">E...</span>
<span class="t " style="left:380.5px;top:577px;line-height:20px;height:20px;transform:scaleX(0.9468);">Cikkszám</span>
<span class="t " style="left:464.5px;top:577px;line-height:20px;height:20px;transform:scaleX(0.9625);">Cikknév</span>
<span class="t " style="left:646.4px;top:577px;line-height:20px;height:20px;transform:scaleX(0.9956);">Mennyiség</span>
<span class="t " style="left:716.5px;top:577px;line-height:20px;height:20px;transform:scaleX(0.9535);">M.e.</span>
<span class="t " style="left:905.5px;top:577px;line-height:20px;height:20px;transform:scaleX(0.9577);">Dev</span>
<span class="t " style="left:1042.4px;top:577px;line-height:20px;height:20px;transform:scaleX(0.9400);">Egységár</span>
<span class="t " style="left:1103.3px;top:577px;line-height:20px;height:20px;transform:scaleX(0.9756);">Engedmény</span>
<span class="t " style="left:1178.5px;top:577px;line-height:20px;height:20px;transform:scaleX(0.8762);">En</span>
<span class="t " style="left:1275.0px;top:577px;line-height:20px;height:20px;transform:scaleX(0.9279);">Eng.ár</span>
<span class="t " style="left:1357.5px;top:577px;line-height:20px;height:20px;transform:scaleX(1.0300);">Nettó érték</span>
<span class="t " style="left:1467.9px;top:577px;line-height:20px;height:20px;transform:scaleX(0.9605);">Br.egységár</span>
<span class="t " style="left:253.0px;top:597px;line-height:20px;height:20px;transform:scaleX(0.9692);">1</span>
<div class="cb" style="left:271px;top:598px"><svg width="14" height="14" viewBox="0 0 14 14" class="i0"><path d="M2.6 7.6L5.2 10.6L11.2 2.4" fill="none" stroke="#111" stroke-width="1.5"/></svg></div>
<div class="cb" style="left:299px;top:598px"></div>
<div class="cb" style="left:327px;top:598px"></div>
<div class="cb" style="left:355px;top:598px"></div>
<span class="t " style="left:380.5px;top:597px;line-height:20px;height:20px;transform:scaleX(0.9095);">DARABOS</span>
<div style="left:462px;top:596px;width:164px;height:19px;overflow:hidden">
<span class="t " style="left:2.5px;top:1px;line-height:20px;height:20px;transform:scaleX(0.9403);">DARABOS_TERMÉK - dedikált helyekre</span>
</div>
<span class="t " style="left:673.5px;top:597px;line-height:20px;height:20px;transform:scaleX(0.9692);">1</span>
<span class="t " style="left:716.5px;top:597px;line-height:20px;height:20px;transform:scaleX(1.0579);">db</span>
<span class="t " style="left:905.5px;top:597px;line-height:20px;height:20px;transform:scaleX(0.9302);">Ft</span>
<span class="t " style="left:1042.1px;top:597px;line-height:20px;height:20px;transform:scaleX(0.9603);">1.000,-</span>
<span class="t " style="left:1142.5px;top:597px;line-height:20px;height:20px;transform:scaleX(0.9692);">0</span>
<span class="t " style="left:1178.5px;top:597px;line-height:20px;height:20px;transform:scaleX(0.9204);">%</span>
<span class="t " style="left:1258.6px;top:597px;line-height:20px;height:20px;transform:scaleX(0.9603);">1.000,-</span>
<span class="t " style="left:1371.1px;top:597px;line-height:20px;height:20px;transform:scaleX(0.9603);">1.000,-</span>
<span class="t " style="left:1483.1px;top:597px;line-height:20px;height:20px;transform:scaleX(0.9603);">1.270,-</span>
<span class="t " style="left:1371.1px;top:797px;line-height:20px;height:20px;transform:scaleX(0.9603);">1.000,-</span>
<div style="left:849px;top:363px;width:310px;height:129px;background:#000;"></div>
<div style="left:850px;top:364px;width:308px;height:127px;background:#e3eff7;"></div>
<div style="left:850px;top:364px;width:308px;height:1px;background:#f4fbff;"></div>
<div style="left:851px;top:365px;width:306px;height:125px;background:linear-gradient(180deg,#7bb0cf 0,#7bb0cf 24px,#d2e5f1 45px,#1a7eb0 45px,#1a7eb0 100%);"></div>
<div style="left:851px;top:446px;width:4px;height:40px;background:linear-gradient(#1a7eb0,#3f98c4);"></div>
<div style="left:851px;top:486px;width:306px;height:4px;background:linear-gradient(90deg,#4a9fc9 0,#3d97c4 50px,#1c80b4 200px,#1c80b4 300px,#3a94c2 400px,#2487b9 520px,#1c80b4 700px,#2a8bbb 1000px,#2083b6 100%);"></div>
<div style="left:850px;top:490px;width:308px;height:1px;background:#2bd0ee;"></div>
<div style="left:850px;top:490px;width:1px;height:1px;background:#e8ffff;"></div>
<div style="left:1157px;top:365px;width:1px;height:126px;background:#2bd0f6;"></div>
<div style="left:855px;top:388px;width:298px;height:98px;background:#c3dcea;"></div>
<div style="left:856px;top:389px;width:296px;height:96px;background:#2c374d;"></div>
<div style="left:857px;top:390px;width:294px;height:94px;background:#fafafa;"></div>
<div style="left:851px;top:365px;width:306px;height:23px;background:linear-gradient(100deg,#7db4d3 0,#86bad7 18%,#5d9fc5 38%,#2f81af 55%,#4a99c4 68%,#62a9d1 80%,#6aaed4 100%);"></div>
<div style="left:851px;top:388px;width:5px;height:22px;background:linear-gradient(#88bbd8,#d4e6f2);"></div>
<div style="left:1152px;top:388px;width:5px;height:22px;background:linear-gradient(#6fb1d6,#d4e6f2);"></div>
<div style="left:1152px;top:410px;width:5px;height:76px;background:#2793c4;"></div>
<div style="left:855px;top:388px;width:298px;height:1px;background:#c3dcea;"></div>
<div style="left:855px;top:388px;width:1px;height:98px;background:#c3dcea;"></div>
<div style="left:1152px;top:388px;width:1px;height:98px;background:#c3dcea;"></div>
<div style="left:856px;top:366px;width:104px;height:21px;background:radial-gradient(ellipse at center,rgba(255,255,255,.55) 0,rgba(255,255,255,.28) 45%,rgba(255,255,255,0) 72%);"></div>
<svg class="a" style="left:856px;top:364px" width="24" height="24" viewBox="0 0 34 34"><path d="M5.2 13.6L22.6 8.2L27.4 12.6L10.6 19.4Z" fill="#f08a24"/><ellipse cx="9.3" cy="13.5" rx="3.4" ry="3" fill="#f2d21a"/><ellipse cx="21.5" cy="11.3" rx="3.2" ry="3.4" fill="#f8e8d0"/><ellipse cx="13.8" cy="17" rx="5.2" ry="4.6" fill="#178a3e"/><path d="M5.2 13.6L10.6 19.4L27.4 12.6L23.6 21.4L11.4 27.6Z" fill="#e8481c"/><path d="M9.6 18.6Q12 13 17.6 14.8L19 17.4L10.9 20.6Z" fill="#178a3e"/><path d="M10.6 19.4L27.4 12.6L26.6 14.4L10.9 21Z" fill="#c9280e"/><path d="M11.8 12L14.4 5.6L21.4 16.4" stroke="#8a8a92" stroke-width="1.5" fill="none" stroke-linejoin="round"/></svg>
<span class="t " style="left:882.4px;top:368px;line-height:20px;height:20px;transform:scaleX(0.9893);color:#000;">Tétel felvétel</span>
<div style="left:1109px;top:364px;width:44px;height:18px;background:rgba(255,255,255,.75);border-radius:0 0 5px 5px"></div>
<div style="left:1110px;top:364px;width:42px;height:17px;background:#4a1a16;border-radius:0 0 4px 4px"></div>
<div style="left:1111px;top:365px;width:40px;height:15px;border-radius:0 0 3px 3px;background:linear-gradient(#e8b8b1 0,#d4958d 47%,#b7402a 53%,#c0604a 80%,#d08e7c 100%)"></div>
<svg class="a" style="left:1121px;top:364px" width="22" height="17" viewBox="0 0 22 17"><text x="10.6" y="12.9" text-anchor="middle" font-family="Liberation Sans, sans-serif" font-weight="bold" font-size="17.5" fill="#fff" stroke="#39435c" stroke-width="2.4" paint-order="stroke" stroke-linejoin="round">x</text></svg>
<div style="left:857px;top:390px;width:294px;height:94px;background:#fff;"></div>
<div style="left:859px;top:392px;width:267px;height:90px;box-sizing:border-box;border:1px solid #d3d5d7;background:#fafafa"></div>
<span class="t " style="left:870.0px;top:397px;line-height:20px;height:20px;transform:scaleX(1.0122);color:#000;">Nettó ár:</span>
<span class="t " style="left:870.0px;top:418px;line-height:20px;height:20px;transform:scaleX(0.9963);color:#000;">Bruttó ár:</span>
<span class="t " style="left:870.0px;top:460px;line-height:20px;height:20px;transform:scaleX(0.9839);color:#000;">Mennyiség:</span>
<div class="f" style="left:947px;top:396px;width:133px;height:19px"></div>
<div class="f" style="left:947px;top:417px;width:133px;height:19px"></div>
<div class="f" style="left:947px;top:459px;width:133px;height:19px;border-color:#3f7db0;background:#fff;box-shadow:inset 0 0 0 1px #bcdcf6"></div>
<span class="t " style="left:1002.9px;top:397px;line-height:20px;height:20px;transform:scaleX(0.9603);color:#3f5ae8;">1.000,-</span>
<span class="t " style="left:1002.9px;top:418px;line-height:20px;height:20px;transform:scaleX(0.9603);color:#3f5ae8;">1.270,-</span>
<span class="t " style="left:1025.6px;top:460px;line-height:20px;height:20px;transform:scaleX(0.9692);color:#222;">1</span>
<div style="left:1034px;top:460px;width:2px;height:17px;background:#000;"></div>
<div class="f" style="left:1087px;top:459px;width:28px;height:19px"></div>
<span class="t " style="left:1090.4px;top:460px;line-height:20px;height:20px;transform:scaleX(1.0579);color:#4450e4;">db</span>
<div style="left:1128px;top:461px;width:21px;height:21px;box-sizing:border-box;border:1px solid #c3c5c7;border-radius:3px;background:#fbfbfb"><div style="left:1px;top:1px;width:17px;height:17px;background:linear-gradient(#fdfdfd 0,#f1f1f1 45%,#d2d2d2 100%)"></div><svg class="i0" width="19" height="19" viewBox="0 0 19 19"><path d="M4 11.4L7.4 14L14.2 4.4" fill="none" stroke="#4bae7c" stroke-width="1.7"/></svg></div>
</div></body></html>
